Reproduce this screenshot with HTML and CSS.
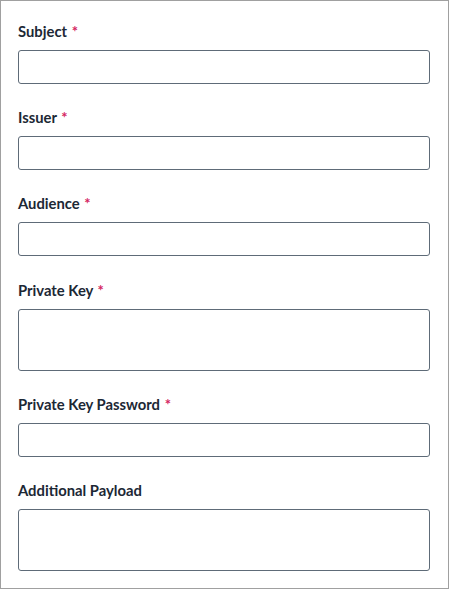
FILE: index.html
```html
<!DOCTYPE html>
<html>
<head>
<meta charset="utf-8">
<link rel="stylesheet" href="styles.css">
</head>
<body>
<div class="panel">
  <div class="field">
    <label class="label">Subject <span class="req">*</span></label>
    <input class="input" type="text">
  </div>
  <div class="field">
    <label class="label">Issuer <span class="req">*</span></label>
    <input class="input" type="text">
  </div>
  <div class="field">
    <label class="label">Audience <span class="req">*</span></label>
    <input class="input" type="text">
  </div>
  <div class="field">
    <label class="label">Private Key <span class="req">*</span></label>
    <textarea class="input area"></textarea>
  </div>
  <div class="field">
    <label class="label">Private Key Password <span class="req">*</span></label>
    <input class="input" type="password">
  </div>
  <div class="field">
    <label class="label">Additional Payload</label>
    <textarea class="input area"></textarea>
  </div>
</div>
</body>
</html>
```
FILE: styles.css
```css
html, body {
  margin: 0;
  padding: 0;
  background: #ffffff;
}
.panel {
  box-sizing: border-box;
  width: 449px;
  height: 589px;
  border: 1px solid #a0a0a0;
  padding: 20px 18px 0 17px;
  display: flex;
  flex-direction: column;
  gap: 23.2px;
  font-family: Lato, "Open Sans", sans-serif;
}
.field {
  display: flex;
  flex-direction: column;
  gap: 9px;
}
.label {
  font-size: 14.8px;
  line-height: 20px;
  height: 20px;
  font-weight: 700;
  color: #1c2835;
}
.req {
  color: #d4255f;
  margin-left: 1px;
}
.input {
  box-sizing: border-box;
  width: 412px;
  height: 34px;
  margin: 0;
  border: 1px solid #5e6b78;
  border-radius: 3px;
  background: #fff;
  font-family: inherit;
  font-size: 14px;
  padding: 6px 8px;
  outline: none;
  resize: none;
  display: block;
}
.area {
  height: 62px;
}
```
